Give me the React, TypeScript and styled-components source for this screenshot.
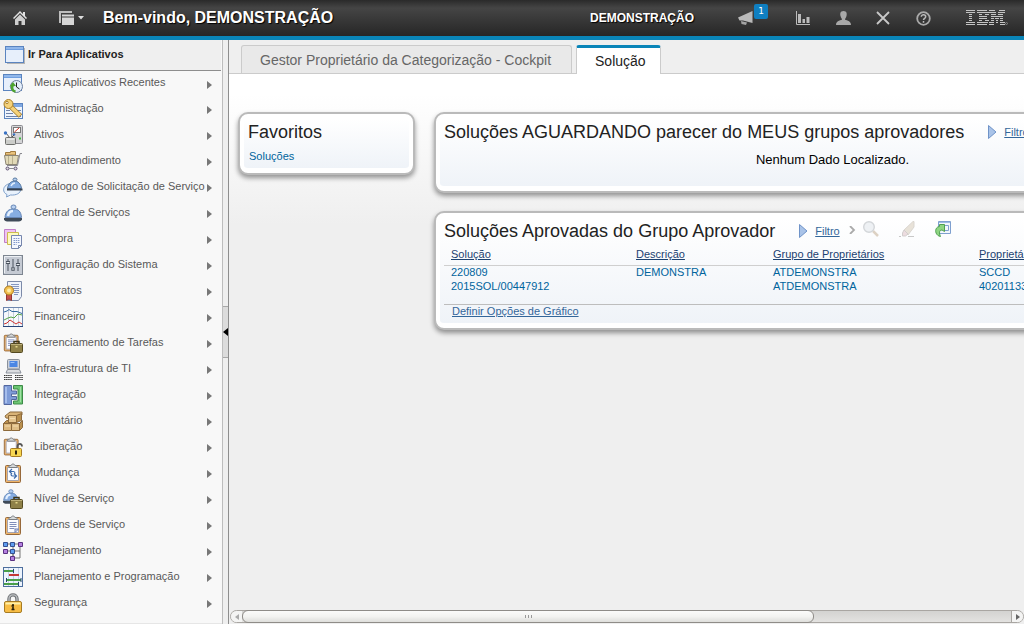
import React from 'react';
import styled, { createGlobalStyle, css } from 'styled-components';

const GlobalStyle = createGlobalStyle`
  *, *::before, *::after { box-sizing: border-box; }
  body {
    margin: 0;
    background: #efefef;
    color: #222;
    font-family: "Liberation Sans", Arial, sans-serif;
    font-size: 11px;
    line-height: 14px;
  }
  button { font: inherit; color: inherit; background: none; border: 0; padding: 0; cursor: pointer; }
  svg { display: block; flex: none; }
  h1, h2, p, ul { margin: 0; padding: 0; font-weight: normal; }
`;

/* ---------- shell ---------- */

const Shell = styled.div`
  display: flex;
  flex-direction: column;
  height: 100vh;
  overflow: hidden;
`;

const TopBar = styled.header`
  display: flex;
  align-items: center;
  flex: none;
  height: 40px;
  padding: 0 16px 0 10px;
  color: #fff;
  background: linear-gradient(#2a2a2a 0, #454545 8px, #262626 36px);
  border-bottom: 4px solid #0a85b8;
  text-shadow: 1px 1px 1px #000;
`;

const BarButton = styled.button<{ $wide?: boolean }>`
  display: flex;
  align-items: center;
  justify-content: center;
  position: relative;
  gap: 4px;
  width: ${(p) => (p.$wide ? '30px' : '20px')};
  height: 20px;
`;

const BarStart = styled.div`
  display: flex;
  align-items: center;
  gap: 26px;
`;

const Welcome = styled.h1`
  margin-left: 17px;
  font-size: 16px;
  line-height: 20px;
  font-weight: bold;
  white-space: nowrap;
`;

const BarEnd = styled.div`
  display: flex;
  align-items: center;
  margin-left: auto;
`;

const UserName = styled.span`
  margin-right: 41px;
  font-size: 12px;
  font-weight: bold;
  white-space: nowrap;
`;

const BarTools = styled.div`
  display: flex;
  gap: 20px;
  margin: 0 33px 0 38px;
`;

const Badge = styled.span`
  position: absolute;
  left: 19px;
  top: -4px;
  width: 14px;
  height: 15px;
  border-radius: 2px;
  background: #0f7fc1;
  font-family: "DejaVu Sans", sans-serif;
  font-size: 9px;
  line-height: 15px;
  text-align: center;
  text-shadow: none;
`;

const Workspace = styled.div`
  display: flex;
  flex: 1;
  min-height: 0;
`;

/* ---------- sidebar ---------- */

const Sidebar = styled.nav`
  flex: none;
  width: 222px;
  background: #f8f8f8;
  border-bottom: 1px solid #e6e6e6;
  overflow: hidden;
`;

const SidebarTitle = styled.h2`
  display: flex;
  align-items: center;
  gap: 3px;
  height: 31px;
  padding: 0 0 2px 5px;
  margin-right: 1px;
  background: #efefef;
  border-bottom: 1px solid #8e8e8e;
`;

const SidebarHeading = styled.span`
  font-size: 11px;
  font-weight: bold;
`;

const Menu = styled.ul`
  list-style: none;
`;

const MenuItem = styled.li`
  height: 26px;
  &:first-child { height: 25px; }
`;

const MenuButton = styled.button`
  display: flex;
  align-items: center;
  width: 100%;
  height: 100%;
  padding: 0 10px 0 3px;
  color: #595959;
  text-align: left;
  white-space: nowrap;
`;

const MenuLabel = styled.span`
  flex: 1;
  padding-bottom: 3px;
  margin-left: 11px;
`;

const MenuArrow = styled.svg`
  margin-top: 2px;
`;

const Splitter = styled.div`
  display: flex;
  align-items: center;
  flex: none;
  width: 7px;
  background: #efefef;
  border-left: 1px solid #bdbdbd;
  border-right: 1px solid #8e8e8e;
`;

const SplitterGrip = styled.button`
  display: flex;
  align-items: center;
  justify-content: center;
  width: 5px;
  height: 52px;
  background: #dcdcdc;
  border-top: 1px solid #a8a8a8;
  border-bottom: 1px solid #a8a8a8;
`;

/* ---------- main area ---------- */

const Main = styled.main`
  display: flex;
  flex-direction: column;
  flex: 1;
  min-width: 0;
`;

const TabStrip = styled.div`
  display: flex;
  align-items: flex-end;
  gap: 4px;
  flex: none;
  height: 34px;
  padding-left: 12px;
  border-bottom: 1px solid #cbcbcb;
`;

const Tab = styled.button<{ $active?: boolean }>`
  height: 28px;
  padding: 0 20px 0 18px;
  border: 1px solid #cbcbcb;
  border-bottom: 0;
  border-radius: 3px 3px 0 0;
  background: #e9e9e9;
  color: #666;
  font-size: 14px;
  line-height: 26px;
  white-space: nowrap;
  ${(p) =>
    p.$active &&
    css`
      height: 29px;
      margin-bottom: -1px;
      padding-right: 14px;
      border-top: 3px solid #0a85b8;
      background: #fff;
      color: #222;
      line-height: 22px;
    `}
`;

const Viewport = styled.div`
  flex: 1;
  min-height: 0;
  overflow: hidden;
  background: linear-gradient(#fff 0, #fff 20px, #efefef 150px);
`;

const Board = styled.div`
  display: grid;
  grid-template-columns: 177px 797px;
  align-items: start;
  gap: 19px;
  padding: 38px 66px 0 9px;
`;

const Stack = styled.div`
  display: grid;
  gap: 18px;
`;

const Card = styled.section<{ $height: number }>`
  display: flex;
  min-height: ${(p) => p.$height}px;
  padding: 5px 4px;
  border: 2px solid #bababa;
  border-radius: 10px;
  background: linear-gradient(#fff, #eff3f8) content-box, #fff;
  box-shadow: 0 3px 5px rgba(0, 0, 0, 0.4);
`;

const CardBody = styled.div`
  display: flex;
  flex-direction: column;
  flex: 1;
  min-width: 0;
  padding: 2px 4px;
`;

const CardHead = styled.div`
  display: flex;
  align-items: center;
  height: 22px;
`;

const CardTitle = styled.h2`
  font-size: 18px;
  line-height: 22px;
  white-space: nowrap;
`;

const CardTools = styled.div`
  display: flex;
  align-items: center;
  height: 22px;
  margin-left: 24px;
`;

const IconButton = styled.button`
  margin-right: 20px;
  margin-bottom: 4px;
`;

const Chevron = styled.svg`
  margin: 0 7px 2px 9px;
`;

const FilterLink = styled.a`
  margin-left: 7px;
  color: #33669a;
`;

const FavoriteLink = styled.a`
  margin: 6px 0 0 1px;
  color: #00649d;
  text-decoration: none;
`;

const EmptyNote = styled.p`
  margin-top: 9px;
  color: #000;
  font-size: 13px;
  line-height: 16px;
  text-align: center;
`;

const DataTable = styled.table`
  width: 100%;
  margin-top: 4px;
  border-collapse: collapse;
  table-layout: fixed;
  color: #00649d;

  th, td { padding: 0 0 0 7px; text-align: left; font-weight: normal; white-space: nowrap; }
  th { height: 19px; padding-bottom: 2px; border-bottom: 1px solid #cfcfcf; }
  th a { color: #1c4170; }
  th:nth-child(1) { width: 185px; }
  th:nth-child(2) { width: 137px; }
  th:nth-child(3) { width: 206px; }
  td { height: 14px; padding-bottom: 2px; line-height: 12px; }
`;

const CardFoot = styled.div`
  margin-top: 10px;
  padding-left: 8px;
  border-top: 1px solid #bdbdbd;
  line-height: 12px;
  a { color: #33669a; }
`;

/* ---------- horizontal scroll bar ---------- */

const ScrollRow = styled.div`
  display: flex;
  flex: none;
  height: 13px;
  margin: 0 0 1px 1px;
  border: 1px solid #a9a6a2;
  border-radius: 7px;
  background: linear-gradient(#d3d3d1, #e3e2e0);
`;

const ScrollButton = styled.button`
  display: flex;
  align-items: center;
  justify-content: center;
  width: 12px;
  background: #f4f4f3;
  &:first-child { width: 11px; border-radius: 6px 0 0 6px; }
  &:last-child { border-radius: 0 6px 6px 0; border-left: 1px solid #a9a6a2; }
`;

const ScrollTrack = styled.div`
  display: flex;
  flex: 1;
`;

const ScrollThumb = styled.div`
  display: flex;
  align-items: center;
  justify-content: center;
  width: calc(74% + 3px);
  margin: -1px 0;
  border: 1px solid #8f8c88;
  border-radius: 6px;
  background: linear-gradient(#fbfbfa, #f3f3f1 50%, #dededb);
`;

/* ---------- icon parts ---------- */

const Bell = () => (
  <g>
    <path d="M1 15h18v1.500c-1 2-3 2-4 2H5c-1 0-3 0-4-2z" fill="#3f4a58" />
    <path d="M2 14.500C2.500 8 6 6 10.500 6S18 8 18.500 14.500Z" fill="#86ade2" stroke="#6686b5" />
    <path d="M5 13C5.500 9.500 7.500 8 10 8" stroke="#e4f0ff" strokeWidth="2.500" fill="none" />
    <ellipse cx="10.500" cy="4" rx="2.500" ry="2" fill="#b9d1f1" stroke="#6686b5" />
  </g>
);

const Clipboard = ({ lines }: { lines?: boolean }) => (
  <g>
    <rect x="2.500" y="2.500" width="15" height="17" rx="1" fill="#eeb469" stroke="#96683a" />
    <path d="M4.500 4.500h11v13h-11z" fill="#fbfcff" stroke="#a5a5b2" />
    <path d="M6 4.500V2.500h2C8.500.5 11.500.5 12 2.500h2v2z" fill="#d5d8da" stroke="#7d8083" />
    {lines && <path d="M6.500 7.500h7M6.500 9.500h7M6.500 11.500h7M6.500 13.500h5" stroke="#7f8dba" />}
  </g>
);

const Briefcase = () => (
  <g>
    <path d="M11 11V8.500h5V11" fill="none" stroke="#3d3518" strokeWidth="1.500" />
    <rect x="7.500" y="10.500" width="12" height="9" rx="1" fill="#8f8148" stroke="#544a22" />
    <path d="M8 11.500h11" stroke="#bdb07a" />
    <rect x="12.500" y="13" width="2" height="1.500" fill="#e8d98b" />
  </g>
);

const AppWindow = () => (
  <g>
    <rect x="0.500" y="1.500" width="18" height="16" fill="#e7effb" stroke="#5b84bf" />
    <rect x="1" y="2" width="17" height="3" fill="#6f9fe0" />
    <path d="M1 3h17" stroke="#b3cff5" />
  </g>
);

const Padlock = ({ open }: { open?: boolean }) => (
  <g>
    {open ? (
      <g>
        <path d="M14.500 12V9.500c0-3.500 4.500-3.500 4.500 0" fill="none" stroke="#555" strokeWidth="1.800" />
        <rect x="7.500" y="11.500" width="11" height="8" rx="1" fill="#f7d650" stroke="#a67b22" />
        <path d="M13 13.500v4" stroke="#2b210a" strokeWidth="2" />
      </g>
    ) : (
      <g>
        <path d="M6 9V6c0-5.500 8-5.500 8 0v3" fill="none" stroke="#6f7275" strokeWidth="3.400" />
        <path d="M6 9V6c0-5.500 8-5.500 8 0v3" fill="none" stroke="#b9bcbf" strokeWidth="1.400" />
        <rect x="1.500" y="8.500" width="17" height="11" rx="1.500" fill="#f8bd45" stroke="#a67b22" />
        <path d="M2.500 10.500h15" stroke="#fff0a8" strokeWidth="2" />
        <path d="M10 11v2.500M8.500 13h2.500M10 14v3M8.500 16.500h3" stroke="#2b210a" strokeWidth="1.600" />
      </g>
    )}
  </g>
);

const art: Record<string, React.ReactNode> = {
  recent: (
    <g>
      <AppWindow />
      <circle cx="13.500" cy="13.500" r="6" fill="#e4eefb" stroke="#6c7f9e" />
      <path d="M13.500 9.500V14l3 2" stroke="#222" fill="none" />
      <path d="M12.500 18.500c-3-.5-4-3-3-6" stroke="#4da32e" strokeWidth="2.500" fill="none" />
      <path d="M6.500 13.500 10 9l3 4z" fill="#4da32e" />
    </g>
  ),
  admin: (
    <g>
      <rect x="1.500" y="4.500" width="18" height="15" fill="#eef4fd" stroke="#5b84bf" />
      <rect x="2" y="5" width="17" height="3" fill="#7fa8e2" />
      <path d="M3 11.500h4M14 11.500h4M3 14.500h7M16 14.500h2M3 17.500h15" stroke="#6f83a8" />
      <path d="M7 7 17.500 17" stroke="#a07b2e" strokeWidth="5" />
      <path d="M7 7 17 16.500" stroke="#f5d27a" strokeWidth="3.500" />
      <circle cx="5.500" cy="5" r="4.500" fill="#f5d27a" stroke="#a97e27" />
      <circle cx="4" cy="3.500" r="1.200" fill="#fff" stroke="#a97e27" />
    </g>
  ),
  assets: (
    <g>
      <rect x="8.500" y="0.500" width="11" height="18" rx="1" fill="#d4d4d6" stroke="#8b8b90" />
      <rect x="10.500" y="2.500" width="7" height="5" fill="#fff" stroke="#777" />
      <path d="M11.500 7 16 3" stroke="#d52f20" />
      <circle cx="11" cy="9.500" r="1.300" fill="#3b73c4" />
      <path d="M17 12.500v2" stroke="#3fbb3f" strokeWidth="2" />
      <path d="m3 8 4 5M8 13l3-3" stroke="#555" />
      <circle cx="2.500" cy="8" r="1.700" fill="#3b73c4" />
      <rect x="2.500" y="12.500" width="10" height="7" rx="1" fill="#cbccc9" stroke="#6f706d" />
      <path d="M3.500 14h8" stroke="#fff" />
    </g>
  ),
  cart: (
    <g>
      <path d="M2.500 4V1.500h5V.5h5V4z" fill="#e9c27d" stroke="#a27c3f" />
      <path d="M1.500 4.500h14L14 13.500H3z" fill="#e2dab8" stroke="#8d8676" />
      <path d="M5.500 5v8M9.500 5v8" stroke="#b9b08e" />
      <path d="M19 2.500h-2l-2.500 12H4" fill="none" stroke="#8a8a90" />
      <circle cx="4.500" cy="17.500" r="1.500" fill="#ddd" stroke="#5f4f76" />
      <circle cx="12.500" cy="17.500" r="1.500" fill="#ddd" stroke="#5f4f76" />
      <path d="M6 17.500h5" stroke="#8a8a90" />
    </g>
  ),
  catalog: (
    <g>
      <path d="M9 6C2 7 0 11 .8 14c.5 2 2 3 3.200 3.500L3.500 20l4-2c6 .5 10-2 10-5z" fill="#e9f2fc" stroke="#7fa0cb" />
      <path d="M4.500 11.500C5.500 5 9.500 4 12 4S18 6.500 18.500 11.500Z" fill="#7fa8de" stroke="#55779f" />
      <ellipse cx="12" cy="2.500" rx="2" ry="1.500" fill="#b9d1f1" stroke="#55779f" />
      <path d="M4 12.500h15.500" stroke="#35404f" strokeWidth="2" />
      <path d="M8 9c1-2 2-3 4-3" stroke="#e3effd" strokeWidth="1.500" fill="none" />
    </g>
  ),
  bell: <Bell />,
  purchase: (
    <g>
      <path d="M1.500.5h11v13h-11z" fill="#f0c3f2" stroke="#c07fc8" />
      <path d="M4.500 3.500h11v12h-11z" fill="#fdfabf" stroke="#cbbd4e" />
      <path d="M8.500 6.500h10v10l-3 3h-7z" fill="#f4f7fe" stroke="#7686ad" />
      <path d="M10.500 9.500h6M10.500 11.500h6M10.500 13.500h6M10.500 15.500h3" stroke="#8299cc" strokeDasharray="1.500 .7" />
      <path d="M18.500 16.500h-3v3" fill="none" stroke="#7686ad" />
    </g>
  ),
  sliders: (
    <g>
      <rect x="0.500" y="0.500" width="19" height="19" fill="#c5cad3" stroke="#7d8590" />
      <path d="M1.500 18V1.500H18" fill="none" stroke="#edf0f4" />
      <path d="M5 4v12M10 4v12M15 4v12" stroke="#4b535e" />
      <path d="M3 7.500h4M8 14h4M13 9.500h4" stroke="#4b535e" strokeWidth="3" />
      <path d="M3.500 7.500h3M8.500 14h3M13.500 9.500h3" stroke="#eef1f5" />
    </g>
  ),
  contract: (
    <g>
      <path d="M4.500.5h14v15l-3 4h-11z" fill="#eff3fb" stroke="#7c8aa9" />
      <path d="M8 3.500h8M8 5.500h8M8 7.500h8M11 9.500h5M11 11.500h5M11 13.500h4" stroke="#8496c0" />
      <path d="M3.500 13h5v6.500l-2.500-1.500-2.500 1.500z" fill="#c9504d" stroke="#923634" />
      <circle cx="6" cy="9.500" r="4.500" fill="#f2c050" stroke="#a8761d" />
      <circle cx="6" cy="9.500" r="2" fill="#fdeba9" />
    </g>
  ),
  finance: (
    <g>
      <rect x="0.500" y="0.500" width="19" height="19" fill="#f5f8fc" stroke="#6d86ae" />
      <path d="M5.500 1v18M10.500 1v18M15.500 1v18" stroke="#c5cedb" />
      <path d="m1 5 3-1 2-1.500 3 2h5l5 2" stroke="#356b9f" fill="none" />
      <path d="m1 13 4-2 3-1 3 1 4-4 4 1" stroke="#55a545" fill="none" />
      <path d="m1 17 3-1 3-3 3 2 3 2 3-2 3 2" stroke="#cf3430" fill="none" />
      <path d="M0 19.500h20" stroke="#28447a" />
    </g>
  ),
  tasks: (
    <g>
      <g transform="translate(-1 0) scale(.92)"><Clipboard lines /></g>
      <Briefcase />
    </g>
  ),
  infra: (
    <g>
      <rect x="4.500" y="0.500" width="12" height="9.500" rx="1" fill="#cdd1d8" stroke="#8a919c" />
      <rect x="6.500" y="2" width="8" height="6" fill="#4a86e4" />
      <path d="M7.500 3.500h4" stroke="#9dc3fa" />
      <path d="M4.500 10.500h12l1.500 3.500h-15z" fill="#dbdde0" stroke="#8a919c" />
      <path d="M1 16.500h8M12 16.500h8M1 18.500h8M12 18.500h8M1 20.500h8M12 20.500h8" stroke="#333" strokeDasharray="1.500 .6" />
    </g>
  ),
  integration: (
    <g>
      <path d="M10.500.5h9v18.500h-9v-3h4.500v-12h-4.500z" fill="#6cc573" stroke="#3d8a48" />
      <path d="M1 .5h7.500v5.500h5v3h-5v2.500h5v3h-5v5H1z" fill="#7f9cd8" stroke="#53679f" />
      <path d="M3 2v16" stroke="#b5caf3" strokeWidth="1.500" />
      <path d="M17.500 2v15" stroke="#a0e0a4" />
    </g>
  ),
  inventory: (
    <g stroke="#8d6a3c">
      <path d="m2 5 5-4 12 0 0 3-4 4-12-1z" fill="#d9b377" />
      <path d="M5.500 4.500h8v7h-8z" fill="#e5c48d" />
      <path d="m13.500 4.500 5-2v7l-5 2z" fill="#b9904f" />
      <path d="M.5 12.500h8v7h-8z" fill="#dcb87e" />
      <path d="M8.500 12.500h8v7h-8z" fill="#e0be86" />
      <path d="m16.500 12.500 3-3v7l-3 3zM.5 12.500l3-3h2v3z" fill="#b9904f" />
      <path d="M7 7.500h5M2 15h5M10 15h5" stroke="#f3dcb0" />
    </g>
  ),
  release: (
    <g>
      <g transform="translate(-1 0) scale(.92)"><Clipboard /></g>
      <Padlock open />
    </g>
  ),
  change: (
    <g>
      <Clipboard />
      <path d="M9 6 6.500 8.500l2.500 2.500M7 8.500h3.500c1 0 1.500.5 1.500 2M11 10.500l2.500 2.500-2.500 2.500M13 13H9.500c-1 0-1.500-.5-1.500-2" fill="none" stroke="#3d6cad" strokeWidth="1.200" />
    </g>
  ),
  level: (
    <g>
      <g transform="translate(-1 -1) scale(.85)"><Bell /></g>
      <Briefcase />
    </g>
  ),
  orders: (
    <g>
      <Clipboard lines />
      <path d="M15.500 14H12v3.500z" fill="#dfe5f5" stroke="#6f7fb0" />
    </g>
  ),
  planning: (
    <g>
      <path d="M4 3h12M3 10h7v7M10 3v14M17 3v14h-7M10 10h7" fill="none" stroke="#777" />
      <path d="M.5 1.500h4v4h-4zM7.500 1.500h4v4h-4zM7.500 8.500h4v4h-4z" stroke="#35508f" fill="#5f9df0" />
      <path d="M15.500 1.500h4v4h-4zM.5 8.500h4v4h-4zM7.500 15.500h4v4h-4z" stroke="#5b3282" fill="#b47fe0" />
    </g>
  ),
  schedule: (
    <g>
      <rect x="0.500" y="0.500" width="19" height="19" fill="#edf4fd" stroke="#4e6f9e" />
      <path d="M5.500 1v18M10.500 1v18M15.500 1v18" stroke="#c2d2e8" />
      <path d="M1 4h10M4 13h14M1 17h15" stroke="#4a9f49" strokeWidth="2" />
      <path d="M6 8h10" stroke="#c43a37" strokeWidth="2" />
      <path d="M10.500 2v4M3.500 11v4M15.500 15v4M18 11v4" stroke="#24456d" />
    </g>
  ),
  lock: <Padlock />,
};

const menu: [string, string][] = [
  ['recent', 'Meus Aplicativos Recentes'],
  ['admin', 'Administração'],
  ['assets', 'Ativos'],
  ['cart', 'Auto-atendimento'],
  ['catalog', 'Catálogo de Solicitação de Serviço'],
  ['bell', 'Central de Serviços'],
  ['purchase', 'Compra'],
  ['sliders', 'Configuração do Sistema'],
  ['contract', 'Contratos'],
  ['finance', 'Financeiro'],
  ['tasks', 'Gerenciamento de Tarefas'],
  ['infra', 'Infra-estrutura de TI'],
  ['integration', 'Integração'],
  ['inventory', 'Inventário'],
  ['release', 'Liberação'],
  ['change', 'Mudança'],
  ['level', 'Nível de Serviço'],
  ['orders', 'Ordens de Serviço'],
  ['planning', 'Planejamento'],
  ['schedule', 'Planejamento e Programação'],
  ['lock', 'Segurança'],
];

/* Each stripe lists its [start, end] segments. */
const logoStripes: number[][][] = [
  [[0, 9], [11, 21], [23, 29], [33, 39]],
  [[0, 9], [11, 23], [23, 30], [32, 39]],
  [[3, 6], [13, 16], [19, 23], [25, 30], [32, 37]],
  [[3, 6], [13, 21], [25, 37]],
  [[3, 6], [13, 21], [25, 28], [29, 33], [34, 37]],
  [[3, 6], [13, 16], [19, 23], [25, 28], [30, 32], [34, 37]],
  [[0, 9], [11, 22], [23, 28], [30, 32], [34, 39]],
  [[0, 9], [11, 21], [23, 28], [34, 39]],
];

const Logo = () => (
  <svg width="42" height="16" viewBox="0 0 42 16" role="img" aria-label="IBM">
    {logoStripes.map((row, y) =>
      row.map(([a, b]) => <rect key={`${y}-${a}`} x={a} y={y * 2} width={b - a} height="1" fill="#c4c4c4" />)
    )}
    <circle cx="40.500" cy="13.500" r="1" fill="none" stroke="#aaa" strokeWidth=".6" />
  </svg>
);

const PlayMark = () => (
  <svg width="9" height="14" viewBox="0 0 9 14">
    <path d="M.5.5 8 7 .5 13.500z" fill="#a9c3e8" stroke="#6f93c8" />
  </svg>
);

function Header() {
  return (
    <TopBar>
      <BarStart>
        <BarButton aria-label="Início">
          <svg width="14" height="14" viewBox="0 0 14 14">
            <path d="M7 0 0 7l1 1 6-6 6 6 1-1-2-2V1h-2v2z" fill="#e2e2e2" />
            <path d="M2 8.500 7 3.500l5 5V14H8.500v-4h-3v4H2z" fill="#cfcfcf" />
          </svg>
        </BarButton>
        <BarButton $wide aria-label="Janelas">
          <svg width="15" height="14" viewBox="0 0 15 14">
            <path d="M0 0h13v2H2v10H0z" fill="#bdbdbd" />
            <path d="M3 3.500h12v2H3zM3 6.500h12V14H3z" fill="#d6d6d6" />
          </svg>
          <svg width="6" height="4" viewBox="0 0 6 4">
            <path d="M0 0h6L3 3.500z" fill="#ddd" />
          </svg>
        </BarButton>
      </BarStart>
      <Welcome>Bem-vindo, DEMONSTRAÇÃO</Welcome>
      <BarEnd>
        <UserName>DEMONSTRAÇÃO</UserName>
        <BarButton aria-label="Avisos">
          <svg width="15" height="14" viewBox="0 0 15 14">
            <path d="M0 6.500 14.500 0v12L5 9.500H1.500z" fill="#b9b9b9" />
            <path d="m3 10 6 1.500-1 2.500-4.500-1z" fill="#a2a2a2" />
          </svg>
          <Badge>1</Badge>
        </BarButton>
        <BarTools>
          <BarButton aria-label="Relatórios">
            <svg width="14" height="14" viewBox="0 0 14 14">
              <path d="M.5 0v13.500H14" stroke="#bbb" fill="none" />
              <path d="M2 3h3v9H2zM6.500 8h2.500v4H6.500zM10.500 6h3v6h-3z" fill="#bbb" />
            </svg>
          </BarButton>
          <BarButton aria-label="Perfil">
            <svg width="15" height="14" viewBox="0 0 15 14">
              <path d="M7.500 0C11 0 11 3 10.500 5S9 7.500 9 8.500s6 .5 6 5.500H0c0-5 6-4.500 6-5.500S5 7 4.500 5 4 0 7.500 0z" fill="#a8a8a8" />
            </svg>
          </BarButton>
          <BarButton aria-label="Sair">
            <svg width="14" height="14" viewBox="0 0 14 14">
              <path d="m1 1 12 12M13 1 1 13" stroke="#c8c8c8" strokeWidth="1.800" />
            </svg>
          </BarButton>
          <BarButton aria-label="Ajuda">
            <svg width="15" height="15" viewBox="0 0 15 15">
              <circle cx="7.500" cy="7.500" r="6.300" fill="none" stroke="#aaa" strokeWidth="1.800" />
              <path d="M5.300 5.800c0-2.800 4.400-2.600 4.400 0 0 1.500-2.200 1.500-2.200 3.200M7.500 10v1.700" fill="none" stroke="#bbb" strokeWidth="1.500" />
            </svg>
          </BarButton>
        </BarTools>
        <Logo />
      </BarEnd>
    </TopBar>
  );
}

function Applications() {
  return (
    <Sidebar aria-label="Ir Para Aplicativos">
      <SidebarTitle>
        <svg width="20" height="19" viewBox="0 0 20 19">
          <path d="M2 18h17V3" fill="none" stroke="#b5b5b5" strokeWidth="2" />
          <AppWindow />
        </svg>
        <SidebarHeading>Ir Para Aplicativos</SidebarHeading>
      </SidebarTitle>
      <Menu>
        {menu.map(([icon, label]) => (
          <MenuItem key={icon}>
            <MenuButton>
              <svg width="20" height="21" viewBox="0 0 20 21">{art[icon]}</svg>
              <MenuLabel>{label}</MenuLabel>
              <MenuArrow width="5" height="8" viewBox="0 0 5 8">
                <path d="M0 0 5 4 0 8z" fill="#777" />
              </MenuArrow>
            </MenuButton>
          </MenuItem>
        ))}
      </Menu>
    </Sidebar>
  );
}

const columns = ['Solução', 'Descrição', 'Grupo de Proprietários', 'Proprietário'];
const records = [
  ['220809', 'DEMONSTRA', 'ATDEMONSTRA', 'SCCD'],
  ['2015SOL/00447912', '', 'ATDEMONSTRA', '40201133'],
];

export default function App() {
  return (
    <Shell>
      <GlobalStyle />
      <Header />
      <Workspace>
        <Applications />
        <Splitter>
          <SplitterGrip aria-label="Recolher menu">
            <svg width="5" height="8" viewBox="0 0 5 8">
              <path d="M5 0 0 4l5 4z" fill="#000" />
            </svg>
          </SplitterGrip>
        </Splitter>
        <Main>
          <TabStrip role="tablist">
            <Tab role="tab">Gestor Proprietário da Categorização - Cockpit</Tab>
            <Tab role="tab" aria-selected $active>Solução</Tab>
          </TabStrip>
          <Viewport>
            <Board>
              <Card $height={63}>
                <CardBody>
                  <CardTitle>Favoritos</CardTitle>
                  <FavoriteLink href="#solucoes">Soluções</FavoriteLink>
                </CardBody>
              </Card>
              <Stack>
                <Card $height={81}>
                  <CardBody>
                    <CardHead>
                      <CardTitle>Soluções AGUARDANDO parecer do MEUS grupos aprovadores</CardTitle>
                      <CardTools>
                        <PlayMark />
                        <FilterLink href="#filtro">Filtro</FilterLink>
                      </CardTools>
                    </CardHead>
                    <EmptyNote>Nenhum Dado Localizado.</EmptyNote>
                  </CardBody>
                </Card>
                <Card $height={119}>
                  <CardBody>
                    <CardHead>
                      <CardTitle>Soluções Aprovadas do Grupo Aprovador</CardTitle>
                      <CardTools>
                        <PlayMark />
                        <FilterLink href="#filtro">Filtro</FilterLink>
                        <Chevron width="7" height="8" viewBox="0 0 7 8">
                          <path d="m1 0 4 4-4 4" fill="none" stroke="#aaa" strokeWidth="1.800" />
                        </Chevron>
                        <IconButton aria-label="Localizar">
                          <svg width="16" height="16" viewBox="0 0 16 16">
                            <path d="m10 10 5 5" stroke="#ddd2c4" strokeWidth="2.500" />
                            <circle cx="6" cy="6" r="5.300" fill="#eef1f4" stroke="#d3d6d9" strokeWidth="1.400" />
                          </svg>
                        </IconButton>
                        <IconButton aria-label="Limpar filtro">
                          <svg width="16" height="16" viewBox="0 0 16 16">
                            <path d="M5 9 14 .5h1V6l-6 8z" fill="#e8e2d8" stroke="#dad6d0" />
                            <path d="m5 9 4 4-2.500 2H3.500v-3z" fill="#ecdcdf" stroke="#d2cdcd" />
                            <path d="M0 15.500h2M9 15.500h6" stroke="#c8c8c8" />
                          </svg>
                        </IconButton>
                        <IconButton aria-label="Atualizar">
                          <svg width="16" height="16" viewBox="0 0 16 16">
                            <path d="M3.500.5h12v12h-12z" fill="#f1f6fc" stroke="#7fa0cf" />
                            <path d="M4 1.500h11" stroke="#9dbbe4" />
                            <path d="M9.500 4.500h4v5h-4" stroke="#7fa0cf" fill="none" />
                            <path d="M5.500 15.500C-.5 14.500-1 6 4.500 5.500V3.500h5v7L7 9C4 9 4 12 5.500 15.500z" fill="#8ed582" stroke="#4fa050" />
                          </svg>
                        </IconButton>
                      </CardTools>
                    </CardHead>
                    <DataTable>
                      <thead>
                        <tr>
                          {columns.map((c) => (
                            <th key={c} scope="col"><a href="#ordenar">{c}</a></th>
                          ))}
                        </tr>
                      </thead>
                      <tbody>
                        {records.map((r) => (
                          <tr key={r[0]}>
                            {r.map((cell, i) => <td key={i}>{cell}</td>)}
                          </tr>
                        ))}
                      </tbody>
                    </DataTable>
                    <CardFoot>
                      <a href="#grafico">Definir Opções de Gráfico</a>
                    </CardFoot>
                  </CardBody>
                </Card>
              </Stack>
            </Board>
          </Viewport>
          <ScrollRow>
            <ScrollButton aria-label="Rolar para a esquerda">
              <svg width="4" height="6" viewBox="0 0 4 6"><path d="M4 0 0 3l4 3z" fill="#aaa" /></svg>
            </ScrollButton>
            <ScrollTrack>
              <ScrollThumb>
                <svg width="7" height="3" viewBox="0 0 7 3"><path d="M.5 0v3M3.500 0v3M6.500 0v3" stroke="#999" /></svg>
              </ScrollThumb>
            </ScrollTrack>
            <ScrollButton aria-label="Rolar para a direita">
              <svg width="4" height="6" viewBox="0 0 4 6"><path d="m0 0 4 3-4 3z" fill="#666" /></svg>
            </ScrollButton>
          </ScrollRow>
        </Main>
      </Workspace>
    </Shell>
  );
}
